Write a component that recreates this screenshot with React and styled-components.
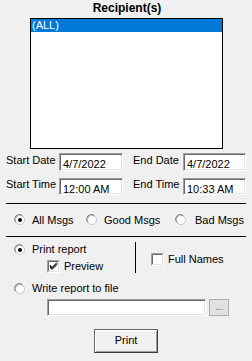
import React from "react";
import styled, { createGlobalStyle } from "styled-components";

const Global = createGlobalStyle`
  html, body { margin: 0; padding: 0; background: #f0f0f0; }
  body { font-family: "Liberation Sans", Arial, sans-serif; font-size: 11px; color: #000; }
  * { box-sizing: border-box; }
`;

const Page = styled.div`
  width: 252px;
  height: 361px;
  padding: 0 6px;
  display: flex;
  flex-direction: column;
  background: #f0f0f0;
`;

const Title = styled.div`
  height: 18px;
  padding-top: 2px;
  text-align: center;
  font-weight: bold;
  font-size: 12px;
  line-height: 13px;
  padding-left: 2px;
`;

const ListBox = styled.div`
  margin-left: 24px;
  width: 193px;
  height: 131px;
  border: 1px solid #000;
  background: #fff;
`;

const ListItem = styled.div`
  height: 13px;
  line-height: 13px;
  padding-left: 1px;
  background: ${(p) => (p.$selected ? "#0078d7" : "transparent")};
  color: ${(p) => (p.$selected ? "#fff" : "#000")};
`;

const DateGrid = styled.div`
  margin-top: 4px;
  display: grid;
  grid-template-columns: 53px 64px 60px 63px;
  grid-template-rows: 18px 17px;
  row-gap: 7px;
  align-items: center;
`;

const Label = styled.span`
  line-height: 13px;
  margin-top: -4px;
  padding-left: ${(p) => p.$indent || 0}px;
  white-space: nowrap;
`;

const sunken = `
  background: #fff;
  border-style: solid;
  border-width: 1px;
  border-color: #a0a0a0 #fff #fff #a0a0a0;
  box-shadow: inset 1px 1px 0 #696969, inset -1px -1px 0 #e3e3e3;
`;

const Field = styled.div`
  ${sunken}
  height: ${(p) => p.$h || 18}px;
  width: ${(p) => p.$w}px;
  padding: 4px 0 0 3px;
  line-height: 12px;
  white-space: nowrap;
`;

const Rule = styled.div`
  height: 1px;
  background: #000;
  margin-top: ${(p) => p.$mt || 0}px;
`;

const RadioRow = styled.div`
  height: 32px;
  display: flex;
  align-items: center;
  padding-left: 8px;
`;

const Option = styled.label`
  display: flex;
  align-items: center;
  gap: ${(p) => p.$gap || 6}px;
  width: ${(p) => (p.$w ? p.$w + "px" : "auto")};
  line-height: 13px;
  white-space: nowrap;
  flex-shrink: 0;
`;

const ReportArea = styled.div`
  display: grid;
  grid-template-columns: 129px 1px 1fr;
  height: 41px;
`;

const LeftCol = styled.div`
  display: flex;
  flex-direction: column;
  padding-top: 6px;
`;

const VLine = styled.div`
  background: #000;
  margin-top: 5px;
  height: 31px;
`;

const RightCol = styled.div`
  display: flex;
  align-items: flex-start;
  padding: 16px 0 0 15px;
`;

const Indent = styled.div`
  padding-left: ${(p) => p.$pl}px;
  margin-top: ${(p) => p.$mt || 0}px;
`;

const FileRow = styled.div`
  display: flex;
  margin-top: 4px;
  padding-left: 41px;
  gap: 3px;
`;

const SmallButton = styled.div`
  width: 20px;
  height: 17px;
  border: 1px solid #adadad;
  background: #e1e1e1;
  color: #6d6d6d;
  font-size: 10px;
  text-align: center;
  line-height: 13px;
  letter-spacing: -0.5px;
`;

const ButtonRow = styled.div`
  display: flex;
  padding-left: 88px;
  margin-top: 13px;
`;

const Button = styled.div`
  width: 64px;
  height: 24px;
  background: #f0f0f0;
  border: 1px solid #646464;
  border-right-color: #3c3c3c;
  border-bottom-color: #3c3c3c;
  box-shadow: inset 1px 1px 0 #fff, inset -1px -1px 0 #a0a0a0;
  text-align: center;
  line-height: 21px;
`;

function Radio({ checked }) {
  return (
    <svg width="12" height="12" viewBox="0 0 12 12">
      <path d="M1.5 8 A5 5 0 0 1 8 1.2" fill="none" stroke="#a0a0a0" strokeWidth="1" />
      <circle cx="6" cy="6" r="4.5" fill="#fff" stroke="#c8c8c8" strokeWidth="1" />
      <path d="M2 8.5 A4.5 4.5 0 0 1 8.5 2" fill="none" stroke="#808080" strokeWidth="1" />
      {checked && <circle cx="6" cy="6" r="2" fill="#000" />}
    </svg>
  );
}

function Check({ checked }) {
  return (
    <svg width="13" height="13" viewBox="0 0 13 13">
      <rect x="0.5" y="0.5" width="12" height="12" fill="#fff" stroke="#fff" />
      <path d="M0.5 12.5 V0.5 H12.5" fill="none" stroke="#a0a0a0" />
      <path d="M1.5 11.5 V1.5 H11.5" fill="none" stroke="#696969" />
      <path d="M1.5 11.5 H11.5 V1.5" fill="none" stroke="#e3e3e3" />
      {checked && (
        <path d="M3 6 L5 8.5 L10 3.5 M3 7 L5 9.5 L10 4.5 M3 5 L5 7.5 L10 2.5" fill="none" stroke="#000" strokeWidth="1" />
      )}
    </svg>
  );
}

export default function App() {
  return (
    <>
      <Global />
      <Page>
        <Title>Recipient(s)</Title>
        <ListBox>
          <ListItem $selected>(ALL)</ListItem>
        </ListBox>
        <DateGrid>
          <Label>Start Date</Label>
          <Field $w={64}>4/7/2022</Field>
          <Label $indent={10}>End Date</Label>
          <Field $w={63}>4/7/2022</Field>
          <Label>Start Time</Label>
          <Field $w={64} $h={17}>12:00 AM</Field>
          <Label $indent={10}>End Time</Label>
          <Field $w={63} $h={17}>10:33 AM</Field>
        </DateGrid>
        <Rule $mt={8} />
        <RadioRow>
          <Option $w={72}>
            <Radio checked />
            All Msgs
          </Option>
          <Option $w={89}>
            <Radio />
            Good Msgs
          </Option>
          <Option $gap={8}>
            <Radio />
            Bad Msgs
          </Option>
        </RadioRow>
        <Rule />
        <ReportArea>
          <LeftCol>
            <Indent $pl={8}>
              <Option>
                <Radio checked />
                Print report
              </Option>
            </Indent>
            <Indent $pl={41} $mt={4}>
              <Option $gap={4}>
                <Check checked />
                Preview
              </Option>
            </Indent>
          </LeftCol>
          <VLine />
          <RightCol>
            <Option $gap={4}>
              <Check />
              Full Names
            </Option>
          </RightCol>
        </ReportArea>
        <Indent $pl={8} $mt={4}>
          <Option>
            <Radio />
            Write report to file
          </Option>
        </Indent>
        <FileRow>
          <Field $w={159} $h={17} />
          <SmallButton>...</SmallButton>
        </FileRow>
        <ButtonRow>
          <Button>Print</Button>
        </ButtonRow>
      </Page>
    </>
  );
}
